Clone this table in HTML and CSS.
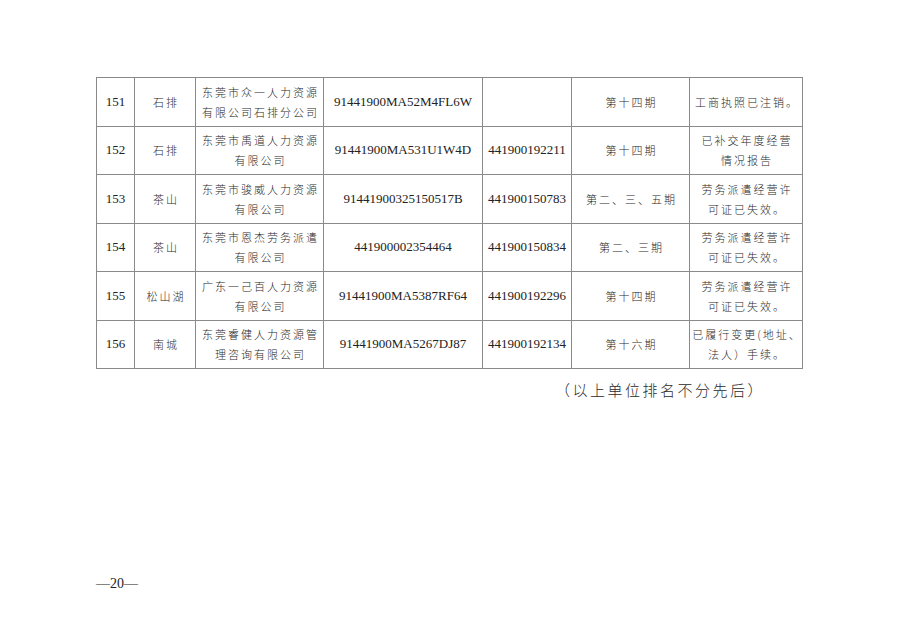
FILE: index.html
```html
<!DOCTYPE html>
<html lang="zh">
<head>
<meta charset="utf-8">
<title>名单</title>
<link rel="stylesheet" href="styles.css">
</head>
<body>
<div class="page">
  <table class="list">
    <colgroup>
      <col class="c-no"><col class="c-area"><col class="c-name"><col class="c-code"><col class="c-lic"><col class="c-period"><col class="c-note">
    </colgroup>
    <tbody>
      <tr>
        <td class="num">151</td>
        <td class="cn">石排</td>
        <td class="cn">东莞市众一人力资源<br>有限公司石排分公司</td>
        <td class="num">91441900MA52M4FL6W</td>
        <td class="num"></td>
        <td class="cn">第十四期</td>
        <td class="cn">工商执照已注销。</td>
      </tr>
      <tr>
        <td class="num">152</td>
        <td class="cn">石排</td>
        <td class="cn">东莞市禹道人力资源<br>有限公司</td>
        <td class="num">91441900MA531U1W4D</td>
        <td class="num">441900192211</td>
        <td class="cn">第十四期</td>
        <td class="cn">已补交年度经营<br>情况报告</td>
      </tr>
      <tr>
        <td class="num">153</td>
        <td class="cn">茶山</td>
        <td class="cn">东莞市骏威人力资源<br>有限公司</td>
        <td class="num">91441900325150517B</td>
        <td class="num">441900150783</td>
        <td class="cn">第二、三、五期</td>
        <td class="cn">劳务派遣经营许<br>可证已失效。</td>
      </tr>
      <tr>
        <td class="num">154</td>
        <td class="cn">茶山</td>
        <td class="cn">东莞市恩杰劳务派遣<br>有限公司</td>
        <td class="num">441900002354464</td>
        <td class="num">441900150834</td>
        <td class="cn">第二、三期</td>
        <td class="cn">劳务派遣经营许<br>可证已失效。</td>
      </tr>
      <tr>
        <td class="num">155</td>
        <td class="cn">松山湖</td>
        <td class="cn">广东一己百人力资源<br>有限公司</td>
        <td class="num">91441900MA5387RF64</td>
        <td class="num">441900192296</td>
        <td class="cn">第十四期</td>
        <td class="cn">劳务派遣经营许<br>可证已失效。</td>
      </tr>
      <tr>
        <td class="num">156</td>
        <td class="cn">南城</td>
        <td class="cn">东莞睿健人力资源管<br>理咨询有限公司</td>
        <td class="num">91441900MA5267DJ87</td>
        <td class="num">441900192134</td>
        <td class="cn">第十六期</td>
        <td class="cn">已履行变更(地址、<br>法人）手续。</td>
      </tr>
    </tbody>
  </table>
  <p class="footnote">（以上单位排名不分先后）</p>
  <div class="pageno">—20—</div>
</div>
</body>
</html>
```

FILE: styles.css
```css
html, body {
  margin: 0;
  padding: 0;
  background: #ffffff;
}

.page {
  width: 900px;
  height: 636px;
  box-sizing: border-box;
  padding: 77px 0 0 96px;
  display: flex;
  flex-direction: column;
  color: #2a2a2a;
  font-family: "Liberation Serif", "Noto Sans CJK SC", serif;
}

.list {
  border-collapse: collapse;
  table-layout: fixed;
  width: 706px;
}

.c-no { width: 38px; }
.c-area { width: 61px; }
.c-name { width: 128px; }
.c-code { width: 159px; }
.c-lic { width: 89px; }
.c-period { width: 118px; }
.c-note { width: 113px; }

.list td {
  border: 1px solid #8a8a8a;
  height: 47.5px;
  padding: 0;
  text-align: center;
  vertical-align: middle;
}

.num {
  font-family: "Liberation Serif", serif;
  font-size: 13px;
  color: #222;
}

.cn {
  font-family: "Noto Sans CJK SC", sans-serif;
  font-size: 11px;
  letter-spacing: 2px;
  line-height: 20px;
  font-weight: 300;
  color: #2a2a2a;
  padding-left: 2px !important;
}

.footnote {
  margin: 11px 0 0 459px;
  font-family: "Noto Sans CJK SC", sans-serif;
  font-size: 15px;
  letter-spacing: 2.5px;
  line-height: 20px;
  font-weight: 300;
  color: #2a2a2a;
}

.pageno {
  margin-top: 175px;
  font-family: "Liberation Serif", serif;
  font-size: 14px;
  line-height: 18px;
  color: #222;
}
```
